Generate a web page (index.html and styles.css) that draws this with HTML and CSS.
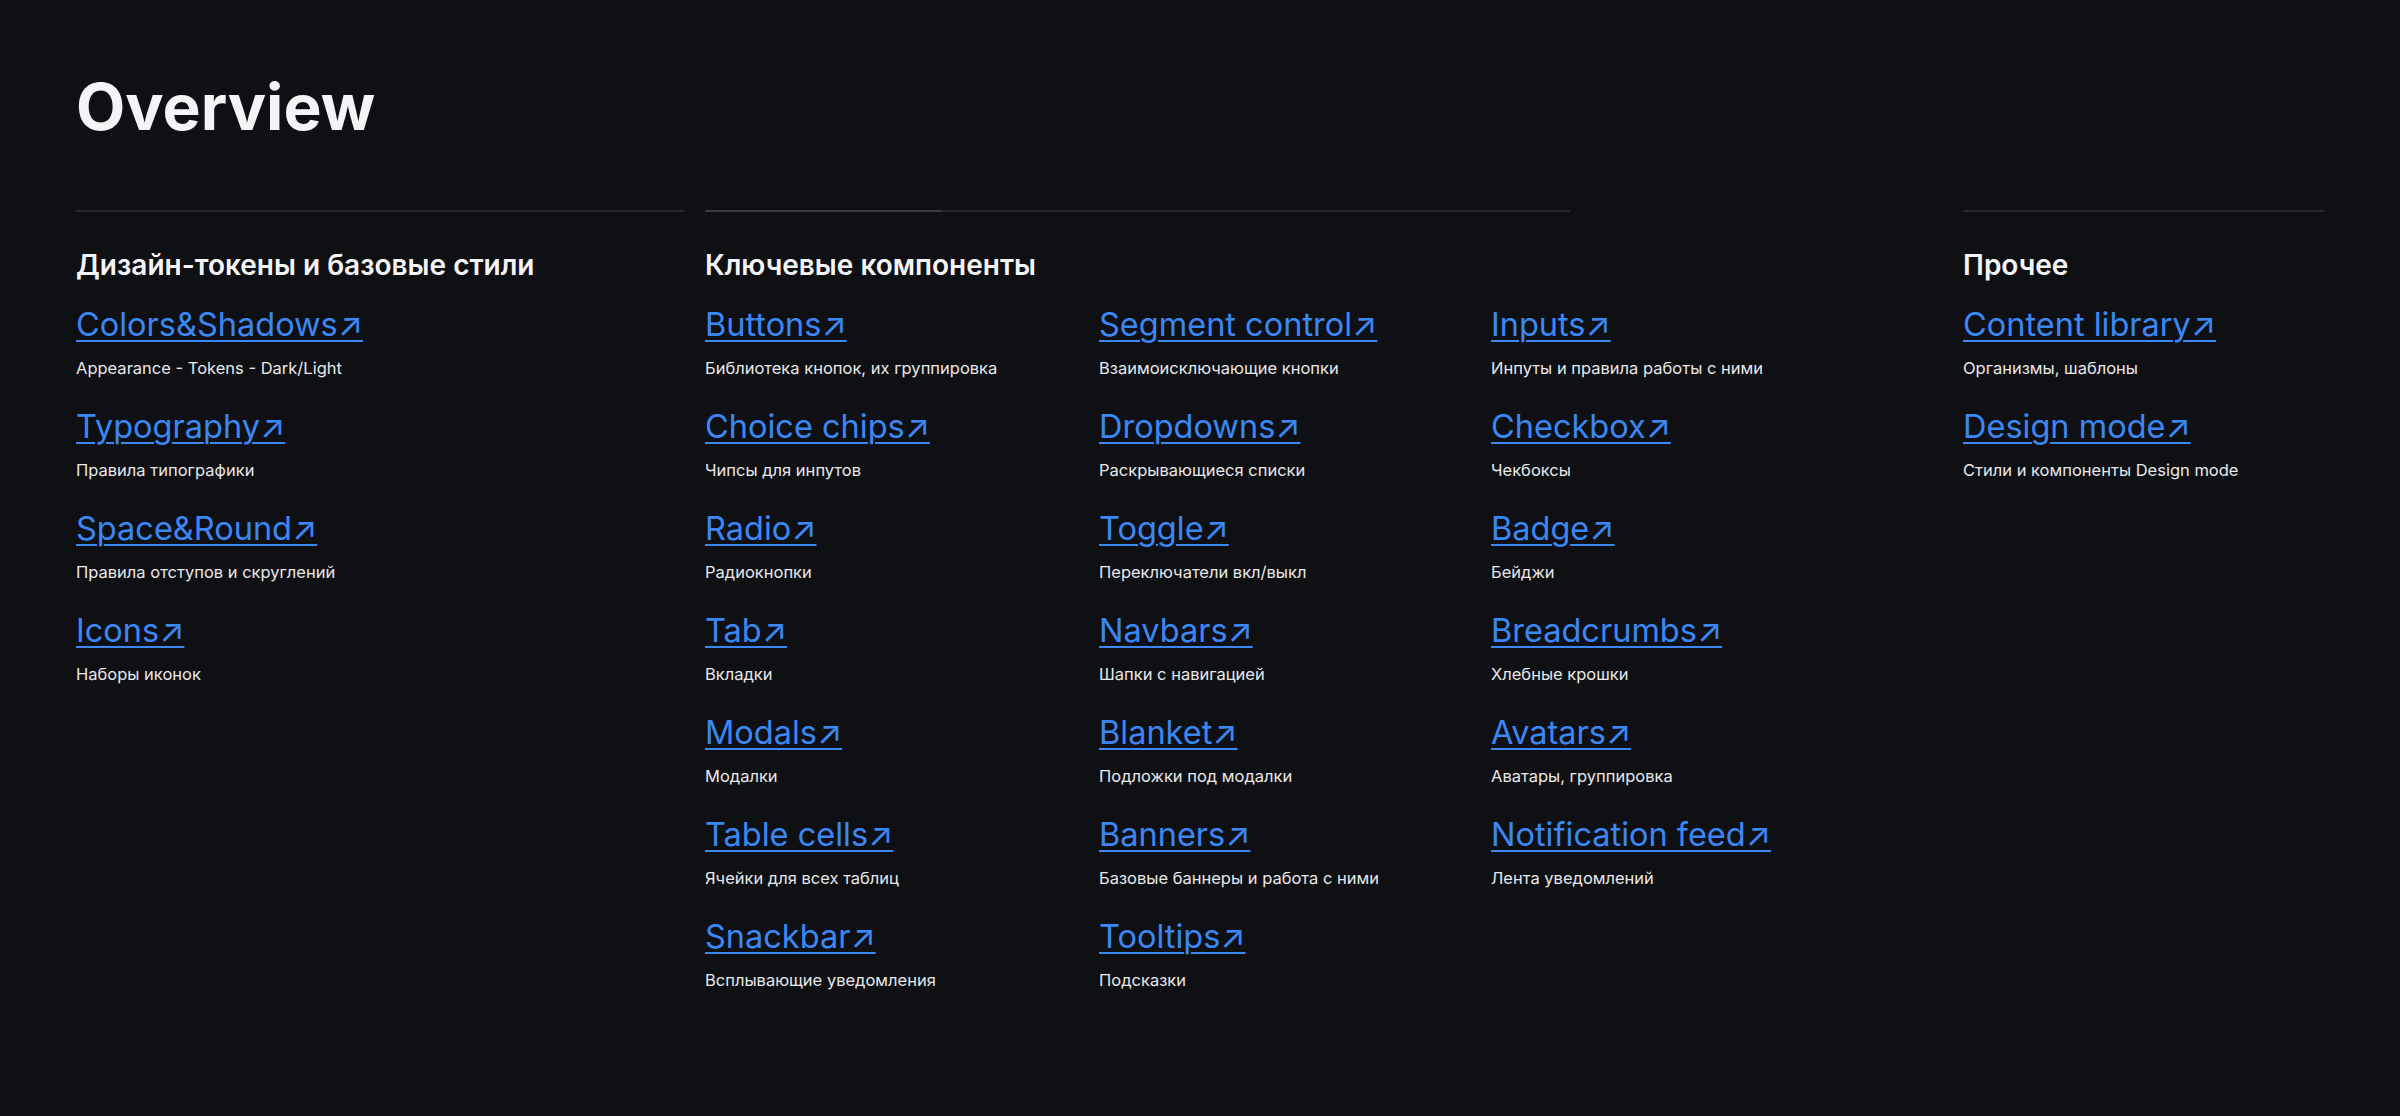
FILE: index.html
```html
<!DOCTYPE html>
<html lang="ru">
<head>
<meta charset="utf-8">
<title>Overview</title>
<link rel="stylesheet" href="styles.css">
</head>
<body>
<main class="page">
  <h1 class="title">Overview</h1>
  <div class="sections">
    <section class="section section-tokens">
      <div class="divider"></div>
      <h2 class="section-title">Дизайн-токены и базовые стили</h2>
      <div class="items items-one">
        <div class="item"><a class="link" href="#">Colors&amp;Shadows↗</a><p class="desc">Appearance - Tokens - Dark/Light</p></div>
        <div class="item"><a class="link" href="#">Typography↗</a><p class="desc">Правила типографики</p></div>
        <div class="item"><a class="link" href="#">Space&amp;Round↗</a><p class="desc">Правила отступов и скруглений</p></div>
        <div class="item"><a class="link" href="#">Icons↗</a><p class="desc">Наборы иконок</p></div>
      </div>
    </section>
    <section class="section section-components">
      <div class="divider divider-accent"></div>
      <h2 class="section-title">Ключевые компоненты</h2>
      <div class="items items-three">
        <div class="item"><a class="link" href="#">Buttons↗</a><p class="desc">Библиотека кнопок, их группировка</p></div>
        <div class="item"><a class="link" href="#">Segment control↗</a><p class="desc">Взаимоисключающие кнопки</p></div>
        <div class="item"><a class="link" href="#">Inputs↗</a><p class="desc">Инпуты и правила работы с ними</p></div>
        <div class="item"><a class="link" href="#">Choice chips↗</a><p class="desc">Чипсы для инпутов</p></div>
        <div class="item"><a class="link" href="#">Dropdowns↗</a><p class="desc">Раскрывающиеся списки</p></div>
        <div class="item"><a class="link" href="#">Checkbox↗</a><p class="desc">Чекбоксы</p></div>
        <div class="item"><a class="link" href="#">Radio↗</a><p class="desc">Радиокнопки</p></div>
        <div class="item"><a class="link" href="#">Toggle↗</a><p class="desc">Переключатели вкл/выкл</p></div>
        <div class="item"><a class="link" href="#">Badge↗</a><p class="desc">Бейджи</p></div>
        <div class="item"><a class="link" href="#">Tab↗</a><p class="desc">Вкладки</p></div>
        <div class="item"><a class="link" href="#">Navbars↗</a><p class="desc">Шапки с навигацией</p></div>
        <div class="item"><a class="link" href="#">Breadcrumbs↗</a><p class="desc">Хлебные крошки</p></div>
        <div class="item"><a class="link" href="#">Modals↗</a><p class="desc">Модалки</p></div>
        <div class="item"><a class="link" href="#">Blanket↗</a><p class="desc">Подложки под модалки</p></div>
        <div class="item"><a class="link" href="#">Avatars↗</a><p class="desc">Аватары, группировка</p></div>
        <div class="item"><a class="link" href="#">Table cells↗</a><p class="desc">Ячейки для всех таблиц</p></div>
        <div class="item"><a class="link" href="#">Banners↗</a><p class="desc">Базовые баннеры и работа с ними</p></div>
        <div class="item"><a class="link" href="#">Notification feed↗</a><p class="desc">Лента уведомлений</p></div>
        <div class="item"><a class="link" href="#">Snackbar↗</a><p class="desc">Всплывающие уведомления</p></div>
        <div class="item"><a class="link" href="#">Tooltips↗</a><p class="desc">Подсказки</p></div>
      </div>
    </section>
    <section class="section section-other">
      <div class="divider"></div>
      <h2 class="section-title">Прочее</h2>
      <div class="items items-one">
        <div class="item"><a class="link" href="#">Content library↗</a><p class="desc">Организмы, шаблоны</p></div>
        <div class="item"><a class="link" href="#">Design mode↗</a><p class="desc">Стили и компоненты Design mode</p></div>
      </div>
    </section>
  </div>
</main>
</body>
</html>
```

FILE: styles.css
```css
* {
  box-sizing: border-box;
}

html,
body {
  margin: 0;
  padding: 0;
  background: #0f1013;
}

body {
  font-family: Inter, "Noto Sans", "Liberation Sans", sans-serif;
  color: #f2f2f4;
  min-height: 1116px;
}

.page {
  padding: 67px 76px 0 76px;
}

.title {
  margin: 0;
  font-size: 64px;
  line-height: 80px;
  font-weight: 700;
  color: #f4f4f6;
}

.sections {
  display: grid;
  grid-template-columns: 629px 1258px 361px;
  margin-top: 63px;
}

.section {
  min-width: 0;
}

.divider {
  height: 2px;
  background: #27272c;
  border-radius: 1px;
}

.section-tokens .divider {
  width: 608px;
}

.section-components .divider {
  width: 865px;
}

.divider-accent {
  background: linear-gradient(to right, #3a3a40 0, #3a3a40 236px, #27272c 236px, #27272c 100%);
}

.section-title {
  margin: 35px 0 0 0;
  font-size: 28px;
  line-height: 36px;
  font-weight: 600;
  color: #f4f4f6;
}

.items {
  margin-top: 22px;
  display: grid;
  row-gap: 27px;
}

.items-one {
  grid-template-columns: 1fr;
}

.items-three {
  grid-template-columns: 394px 392px 394px;
}

.item {
  display: flex;
  flex-direction: column;
  align-items: flex-start;
}

.link {
  font-size: 32.5px;
  line-height: 40px;
  font-weight: 400;
  color: #3b87f3;
  text-decoration: underline;
  text-decoration-thickness: 2px;
  text-underline-offset: 4px;
  white-space: nowrap;
}

.desc {
  margin: 11px 0 0 0;
  font-size: 16.5px;
  line-height: 24px;
  font-weight: 400;
  color: #e8e8eb;
  white-space: nowrap;
}
```
